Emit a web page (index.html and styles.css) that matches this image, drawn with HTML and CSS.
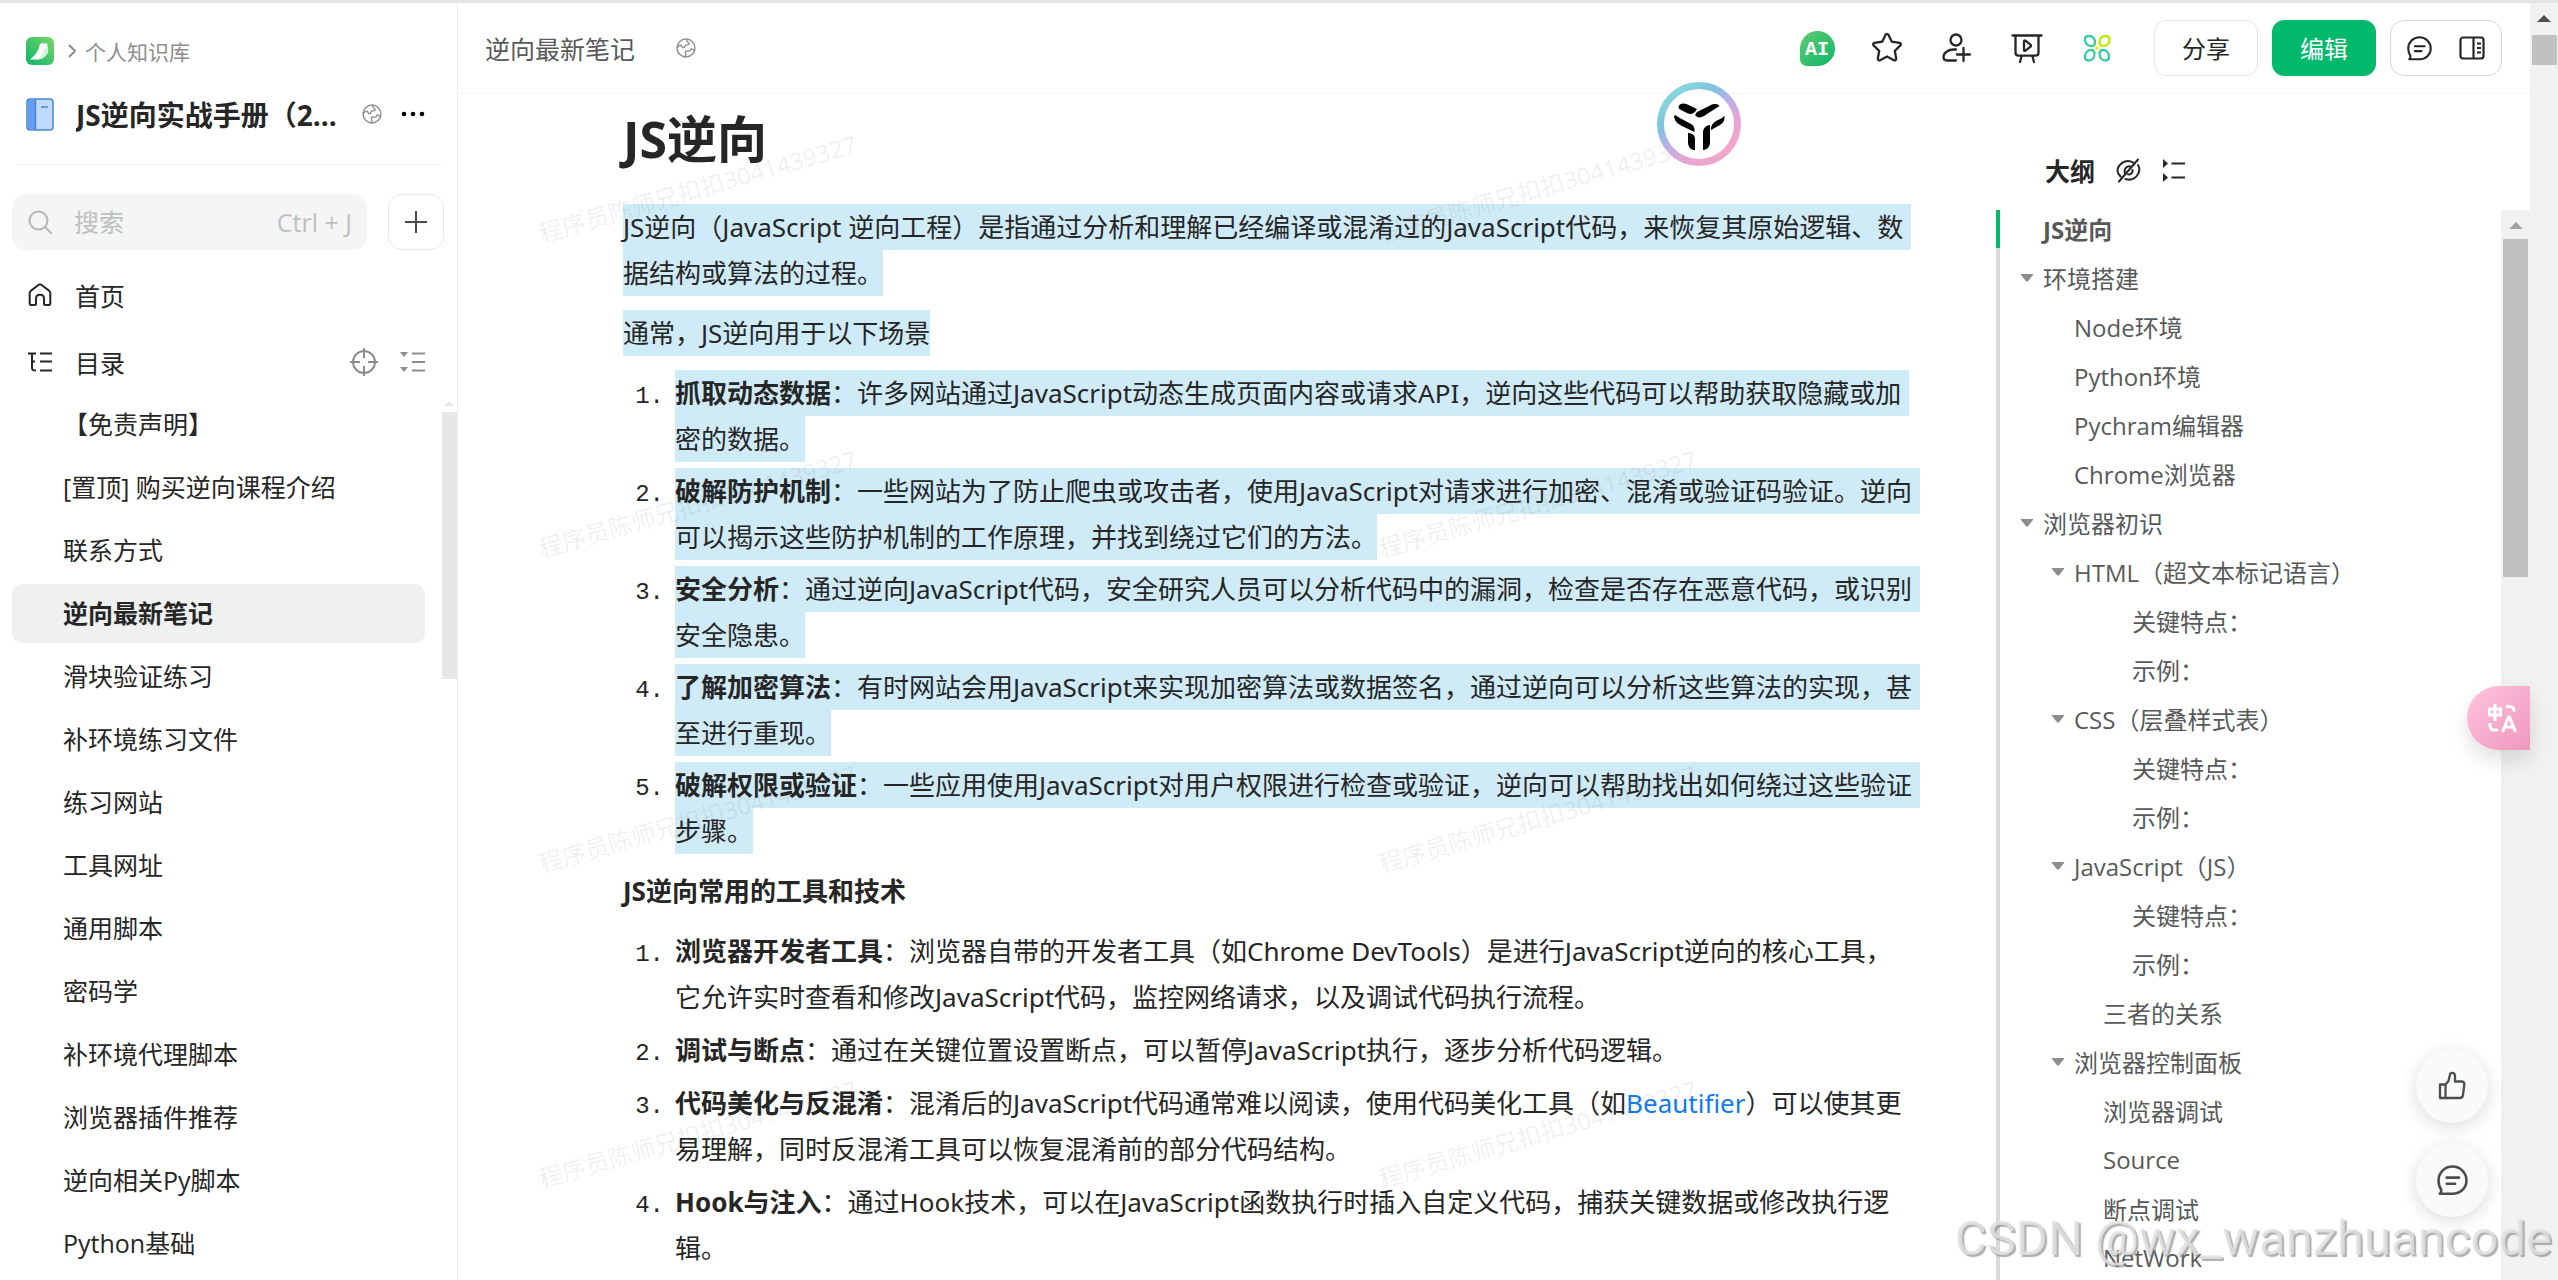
FILE: index.html
```html
<!DOCTYPE html>
<html lang="zh-CN">
<head>
<meta charset="utf-8">
<title>逆向最新笔记</title>
<link rel="stylesheet" href="styles.css">
</head>
<body>
<svg class="defs" aria-hidden="true">
  <symbol id="globe" viewBox="0 0 20 20"><g fill="none" stroke="currentColor" stroke-width="1.4" stroke-linecap="round" stroke-linejoin="round"><circle cx="10" cy="10" r="9"/><path d="M1.5 9.5c1-1.8 2.500-2.800 3.800-1.900 1 .8.8 2.400 2.200 2.200 1.500-.2.900-2 2.400-2.600 1.600-.6 3.300.2 3.400-1.400.1-1.500-1.800-1.300-2.300-2.300-.4-.8-.2-1.500.1-2.300M18.300 12.500c-1-.5-1.700-2-2.900-1.500-1 .5-.6 1.900-2 2.100-1.500.2-3-.6-3.900.6-.8 1.200.6 2 .4 3.100-.1.700-.4 1.200-.7 1.900"/></g></symbol>
  <symbol id="comment" viewBox="0 0 24 24"><path d="M2.200 22.300c.8-1 1.300-2 1.100-3.200C1.900 17.200 1.200 14.800 1.200 12 1.200 6 6 1.200 12 1.200S22.800 6 22.800 12 18 22.300 12 22.300zM7.500 9.800h9.500M7.500 14.500h6.500" fill="none" stroke="currentColor" stroke-width="2" stroke-linecap="round" stroke-linejoin="round"/></symbol>
  <symbol id="caret" viewBox="0 0 14 10"><path d="M1.500 1h11c.8 0 1 .6.500 1.100L8 8.200c-.6.600-1.400.600-2 0L1 2.100C.5 1.600.7 1 1.500 1z" fill="currentColor"/></symbol>
</svg>

<div class="app">
  <aside class="sidebar">
    <nav class="crumbs">
      <a href="#" aria-label="语雀"><svg width="28" height="28" viewBox="0 0 28 28"><defs><linearGradient id="lg" x1="1" y1="0" x2="0" y2="1"><stop offset="0" stop-color="#7ed668"/><stop offset="1" stop-color="#09b46b"/></linearGradient></defs><rect width="28" height="28" rx="6" fill="url(#lg)"/><path d="M4 22.500C8 19 12.500 15 13.500 8.500c.3-1.800 1.500-2.500 3-2.300 2 .3 3.500 0 4.500.600.8.500.5 1.300.2 1.900 1.300 1.800 1.500 4.800.3 7.300-2 4.300-6 6.300-9.500 6.500z" fill="#fff"/><path d="M21.200 9c1.500 3 1 7-1.700 9.800-2.200 2.300-5 3.600-7.500 3.700 4-2.500 2.500-6.500 9.200-13.500z" fill="#d5f1dc"/></svg></a>
      <svg class="chev" width="8" height="14" viewBox="0 0 8 14"><path d="M1 1l6 6-6 6" fill="none" stroke="#8a8f8d" stroke-width="2"/></svg>
      <a href="#">个人知识库</a>
    </nav>
    <div class="book">
      <svg width="28" height="33" viewBox="0 0 28 33"><rect x="1" y="1" width="26" height="31" rx="3" fill="#bfd8fd" stroke="#4a86cf" stroke-width="1.500"/><path d="M3.500 1.500H9.500v30h-6c-1 0-2-1-2-2v-26c0-1 1-2 2-2z" fill="#659df2"/><path d="M9.500 1v31M15 9h7" stroke="#4a86cf" stroke-width="1.500"/></svg>
      <strong>JS逆向实战手册（2...</strong>
      <svg class="gl" width="20" height="20"><use href="#globe"/></svg>
      <button class="plain" aria-label="更多"><svg width="24" height="6" viewBox="0 0 24 6"><circle cx="3" cy="3" r="2.300"/><circle cx="12" cy="3" r="2.300"/><circle cx="21" cy="3" r="2.300"/></svg></button>
    </div>
    <div class="searchrow">
      <label class="search">
        <svg width="24" height="24" viewBox="0 0 24 24"><g fill="none" stroke="#b1b5b4" stroke-width="2" stroke-linecap="round"><circle cx="10.500" cy="10.500" r="9"/><path d="M17.500 17.500l5.500 5.500"/></g></svg>
        <input type="text" placeholder="搜索" aria-label="搜索"><span>Ctrl + J</span>
      </label>
      <button class="add" aria-label="新建"><svg width="22" height="22" viewBox="0 0 22 22"><path d="M11 0v22M0 11h22" stroke="#484a4a" stroke-width="2"/></svg></button>
    </div>
    <a class="navrow" href="#"><svg width="24" height="24" viewBox="0 0 24 24"><path d="M3.500 22c-1 0-1.800-.8-1.800-1.800V10c0-1 .4-1.600 1-2.100l8-6.200c.8-.6 1.800-.6 2.600 0l8 6.200c.6.500 1 1.100 1 2.100v10.200c0 1-.8 1.800-1.800 1.800H17c-.8 0-1-.4-1-1v-5.500c0-2.200-1.500-3.800-4-3.800s-4 1.600-4 3.800V21c0 .6-.2 1-1 1z" fill="none" stroke="#262626" stroke-width="2"/></svg>首页</a>
    <div class="navrow toc">
      <svg width="24" height="22" viewBox="0 0 24 22"><path d="M0 2.500h8M4 3v14c0 2 1 2.500 4 2.500M4 10.500h3M12 2.500h12M12 10.500h12M12 19.500h12" fill="none" stroke="#262626" stroke-width="2"/></svg><span>目录</span>
      <button class="plain" aria-label="定位"><svg width="28" height="28" viewBox="0 0 28 28"><g fill="none" stroke="#8a8f8d" stroke-width="2"><circle cx="14" cy="14" r="11"/><path d="M14 0v10M14 18v10M0 14h10M18 14h10"/></g></svg></button>
      <button class="plain" aria-label="折叠"><svg width="26" height="22" viewBox="0 0 26 22"><path d="M0 1h8L4 6zM0 16h8l-4 5z" fill="#8a8f8d"/><path d="M12 2.500h13M12 11h13M12 19.500h13" stroke="#8a8f8d" stroke-width="2"/></svg></button>
    </div>
    <div class="treewrap">
      <nav class="tree">
        <a href="#">【免责声明】</a><a href="#">[置顶] 购买逆向课程介绍</a><a href="#">联系方式</a><a class="on" href="#">逆向最新笔记</a><a href="#">滑块验证练习</a><a href="#">补环境练习文件</a><a href="#">练习网站</a><a href="#">工具网址</a><a href="#">通用脚本</a><a href="#">密码学</a><a href="#">补环境代理脚本</a><a href="#">浏览器插件推荐</a><a href="#">逆向相关Py脚本</a><a href="#">Python基础</a>
      </nav>
      <div class="sbar"><i class="up"></i><i class="thumb"></i></div>
    </div>
  </aside>

  <main class="main">
    <header class="top">
      <span class="name">逆向最新笔记</span><svg class="gl" width="20" height="20"><use href="#globe"/></svg>
      <div class="tools">
        <button class="plain" aria-label="AI"><span class="ai">AI</span></button>
        <button class="plain" aria-label="收藏"><svg width="32" height="32" viewBox="0 0 32 32"><path d="M14.600 2.700c.6-1.200 2.200-1.200 2.800 0l3.400 7 7.700 1.100c1.300.2 1.800 1.700.9 2.600l-5.600 5.400 1.400 7.700c.2 1.300-1.100 2.300-2.300 1.700L16 24.600l-6.900 3.600c-1.200.6-2.500-.4-2.300-1.700l1.400-7.700-5.600-5.400c-.9-.9-.4-2.400.9-2.600l7.700-1.100z" fill="none" stroke="#262626" stroke-width="2.300"/></svg></button>
        <button class="plain" aria-label="协作"><svg width="30" height="30" viewBox="0 0 30 30"><g fill="none" stroke="#262626" stroke-width="2.300" stroke-linecap="round"><circle cx="14" cy="7" r="5.500"/><path d="M14 16.500h-2C6 16.500 1.500 20 1.500 24c0 2 1.500 3.500 3.500 3.500h9M15 21.500h13M21.500 15v13"/></g></svg></button>
        <button class="plain" aria-label="演示"><svg width="32" height="32" viewBox="0 0 32 32"><g fill="none" stroke="#262626" stroke-width="2.300" stroke-linecap="round" stroke-linejoin="round"><path d="M1.500 3.500h29M4.500 4v16.500c0 2 1.200 3.200 3.200 3.200h16.600c2 0 3.200-1.200 3.200-3.200V4M10.500 24.500l-1.500 5.500M21.500 24.500L23 30M13 9.500c0-.9.700-1.200 1.500-.8l5 4c.8.600.8 1.400 0 2l-5 4c-.8.500-1.500.2-1.500-.8z"/></g></svg></button>
        <button class="plain" aria-label="应用"><svg width="28" height="28" viewBox="0 0 28 28"><g fill="none" stroke="#35cda5" stroke-width="2.300"><path d="M6 2c4 0 6 3 6 6.500 0 2-1.500 3.500-4 3.500-3.500 0-6-2.500-6-6.500C2 3 3 2 6 2z"/><path d="M11.500 20c0 4-2.500 6.500-6 6.500C3 26.500 2 25.500 2 23c0-4 2.500-7 6-7 2.500 0 3.500 1.500 3.500 4zM16.500 20c0 4 2.500 6.500 6 6.500 2.500 0 3.500-1 3.500-3.500 0-4-2.500-7-6-7-2.500 0-3.500 1.500-3.500 4z"/><path d="M22.500 2c-4 0-6 3-6 6.500 0 2 1.500 3.500 4 3.500 3.500 0 6-2.500 6-6.500C26.500 3 25.500 2 22.500 2z" stroke="#b8ec05"/></g><circle cx="14" cy="14" r="1.800" fill="#ffdf00"/></svg></button>
      </div>
      <button class="btn">分享</button>
      <button class="btn primary">编辑</button>
      <div class="pair">
        <button class="plain" aria-label="评论"><svg width="25" height="25"><use href="#comment"/></svg></button>
        <button class="plain" aria-label="侧栏"><svg width="26" height="24" viewBox="0 0 26 24"><g fill="none" stroke="#262626" stroke-width="2.200"><rect x="1.500" y="1.500" width="23" height="21" rx="2.500"/><path d="M14.500 2v20M18 7.500h4M18 12h4M18 16.500h4"/></g></svg></button>
      </div>
    </header>

    <div class="content">
      <article class="doc">
        <h1>JS逆向</h1>
        <p><mark class="full">JS逆向（JavaScript 逆向工程）是指通过分析和理解已经编译或混淆过的JavaScript代码，来恢复其原始逻辑、数</mark><br><mark>据结构或算法的过程。</mark></p>
        <p><mark>通常，JS逆向用于以下场景</mark></p>
        <ol>
          <li><mark class="full"><b>抓取动态数据</b>：许多网站通过JavaScript动态生成页面内容或请求API，逆向这些代码可以帮助获取隐藏或加</mark><br><mark>密的数据。</mark></li>
          <li><mark class="full"><b>破解防护机制</b>：一些网站为了防止爬虫或攻击者，使用JavaScript对请求进行加密、混淆或验证码验证。逆向</mark><br><mark>可以揭示这些防护机制的工作原理，并找到绕过它们的方法。</mark></li>
          <li><mark class="full"><b>安全分析</b>：通过逆向JavaScript代码，安全研究人员可以分析代码中的漏洞，检查是否存在恶意代码，或识别</mark><br><mark>安全隐患。</mark></li>
          <li><mark class="full"><b>了解加密算法</b>：有时网站会用JavaScript来实现加密算法或数据签名，通过逆向可以分析这些算法的实现，甚</mark><br><mark>至进行重现。</mark></li>
          <li><mark class="full"><b>破解权限或验证</b>：一些应用使用JavaScript对用户权限进行检查或验证，逆向可以帮助找出如何绕过这些验证</mark><br><mark>步骤。</mark></li>
        </ol>
        <p><b>JS逆向常用的工具和技术</b></p>
        <ol class="loose">
          <li><b>浏览器开发者工具</b>：浏览器自带的开发者工具（如Chrome DevTools）是进行JavaScript逆向的核心工具，<br>它允许实时查看和修改JavaScript代码，监控网络请求，以及调试代码执行流程。</li>
          <li><b>调试与断点</b>：通过在关键位置设置断点，可以暂停JavaScript执行，逐步分析代码逻辑。</li>
          <li><b>代码美化与反混淆</b>：混淆后的JavaScript代码通常难以阅读，使用代码美化工具（如<a href="#">Beautifier</a>）可以使其更<br>易理解，同时反混淆工具可以恢复混淆前的部分代码结构。</li>
          <li><b>Hook与注入</b>：通过Hook技术，可以在JavaScript函数执行时插入自定义代码，捕获关键数据或修改执行逻<br>辑。</li>
        </ol>
        <div class="marks" aria-hidden="true"><span>程序员陈师兄扣扣3041439327</span><span>程序员陈师兄扣扣3041439327</span><span>程序员陈师兄扣扣3041439327</span><span>程序员陈师兄扣扣3041439327</span><span>程序员陈师兄扣扣3041439327</span><span>程序员陈师兄扣扣3041439327</span><span>程序员陈师兄扣扣3041439327</span><span>程序员陈师兄扣扣3041439327</span></div>
      </article>

      <aside class="outline">
        <div class="ohead"><strong>大纲</strong>
          <button class="plain" aria-label="隐藏"><svg width="25" height="25" viewBox="0 0 25 25"><g fill="none" stroke="#262626" stroke-width="2" stroke-linecap="round"><path d="M17 4.500C9-.5 1.500 8 1.500 12.500c0 2 1.500 4.500 3 6M22 7c4 7-2.500 17-12.500 14M15.500 9c-4-2.500-8 2-6.500 6M16.500 12c.5 3-2 5-4.500 4.500M22 1.500L3 23.500"/></g></svg></button>
          <button class="plain" aria-label="展开"><svg width="24" height="25" viewBox="0 0 24 25"><path d="M1 1l5 4.500-5 4.500zM1 15l5 4.500L1 24z" fill="#262626"/><path d="M9.500 5.500H23M9.500 19.500H23" stroke="#262626" stroke-width="2"/></svg></button>
        </div>
        <div class="obody">
          <nav class="olist">
            <a class="cur" href="#">JS逆向</a>
            <a href="#"><svg><use href="#caret"/></svg>环境搭建</a>
            <a class="l1" href="#">Node环境</a>
            <a class="l1" href="#">Python环境</a>
            <a class="l1" href="#">Pychram编辑器</a>
            <a class="l1" href="#">Chrome浏览器</a>
            <a href="#"><svg><use href="#caret"/></svg>浏览器初识</a>
            <a class="l1" href="#"><svg><use href="#caret"/></svg>HTML（超文本标记语言）</a>
            <a class="l3" href="#">关键特点：</a>
            <a class="l3" href="#">示例：</a>
            <a class="l1" href="#"><svg><use href="#caret"/></svg>CSS（层叠样式表）</a>
            <a class="l3" href="#">关键特点：</a>
            <a class="l3" href="#">示例：</a>
            <a class="l1" href="#"><svg><use href="#caret"/></svg>JavaScript（JS）</a>
            <a class="l3" href="#">关键特点：</a>
            <a class="l3" href="#">示例：</a>
            <a class="l2" href="#">三者的关系</a>
            <a class="l1" href="#"><svg><use href="#caret"/></svg>浏览器控制面板</a>
            <a class="l2" href="#">浏览器调试</a>
            <a class="l2" href="#">Source</a>
            <a class="l2" href="#">断点调试</a>
            <a class="l2" href="#">NetWork</a>
          </nav>
          <div class="sbar wide"><i class="up"></i><i class="thumb"></i></div>
        </div>
      </aside>
    </div>
  </main>
  <div class="sbar wide win"><i class="up"></i><i class="thumb"></i></div>
</div>

<button class="orb" aria-label="助手"><svg width="84" height="84" viewBox="0 0 84 84"><defs><linearGradient id="ring" x1=".15" y1=".1" x2=".8" y2=".95"><stop offset="0" stop-color="#88d6dc"/><stop offset=".25" stop-color="#7fc3e0"/><stop offset=".5" stop-color="#bfaee6"/><stop offset=".75" stop-color="#e6a5d3"/><stop offset="1" stop-color="#f2a6c8"/></linearGradient></defs><circle cx="42" cy="42" r="38.500" fill="#fff" stroke="url(#ring)" stroke-width="7"/><path d="M23 22.500c2-1.500 5-1.200 7.500 0L40 27c-2.500 5-6 5.500-9 4.500l-8-4c-2-1.200-2-3.500 0-5zM40 30l13-6.500c4-2 7.500-2 9.500.5L50 32c-5 3.500-9 5-12 1zM17 34c1-2 3 .5 5 1.500l11 6c4 2 5 4.500 4.500 8.500L25 44c-6-3-7.500-6-8-10zM54 48c0-4 1-6.500 5-9 3.500-2 7-3 8.500-5.500.5 4.500-1 7.500-4.500 9.500zM31 51c4 0 7 2 7 6v11c-4 0-7-2.500-7-8zM46 67V51c0-4 2-7.500 7-8v17c0 5-2.500 7.500-7 8z" fill="#000"/></svg></button>
<button class="translate" aria-label="翻译"><svg width="32" height="30" viewBox="0 0 32 30"><g fill="none" stroke="#fff" stroke-width="3"><path d="M2.500 6h11v6h-11zM8 1v17M19 3.500h4c2.500 0 4 1.500 4 5M3 20v2.500c0 3 1.500 4.500 4.500 4.500H11M15.500 29l6-15h1l6 15M17.500 24h9"/></g></svg></button>
<div class="floats">
  <button aria-label="点赞"><svg width="28" height="30" viewBox="0 0 28 30"><path d="M7.500 13.500H2v13.500h5.500zM7.500 13.500l3-3.500 1.500-6.500c.3-2 4.500-2.500 5 1v6h6.500c2 0 3 1.200 2.800 3l-1.300 10.500c-.3 2-1.300 3-3 3H7.500z" fill="none" stroke="#4a4d4e" stroke-width="2.300" stroke-linejoin="round"/></svg></button>
  <button aria-label="评论"><svg width="31" height="31"><use href="#comment"/></svg></button>
</div>
<div class="csdn" aria-hidden="true">CSDN @wx_wanzhuancode</div>
</body>
</html>
```
FILE: styles.css
```css
*, *::before, *::after { box-sizing: border-box; }
html, body { margin: 0; height: 100%; overflow: hidden; }
body {
  font-family: "Open Sans", "Noto Sans CJK SC", sans-serif;
  font-size: 24px;
  color: #262626;
  background: #fff;
  text-spacing-trim: space-all;
}
a { color: inherit; text-decoration: none; }
button { font: inherit; color: inherit; cursor: pointer; }
svg { display: block; flex: none; }
.defs { position: absolute; width: 0; height: 0; }
.plain { border: 0; background: none; padding: 0; display: flex; }
.gl { color: #8a8f8d; }

.app { display: flex; height: 100%; border-top: 3px solid #e4e4e4; }

/* sidebar */
.sidebar {
  flex: none; width: 458px; display: flex; flex-direction: column;
  border-right: 1px solid #eceeed; overflow: hidden; font-size: 25px;
}
.crumbs { display: flex; align-items: center; height: 30px; margin-top: 33px; padding-left: 26px; font-size: 21px; color: #8a8f8d; }
.chev { margin: 0 9px 0 14px; }
.book { display: flex; align-items: center; height: 99px; margin: 0 16px; padding: 0 16px 2px 10px; border-bottom: 1px solid #f0f2f1; }
.book strong { font-size: 28px; flex: 1; margin-left: 22px; white-space: nowrap; overflow: hidden; }
.book .gl { margin-right: 19px; }
.searchrow { display: flex; justify-content: space-between; padding: 0 13px 0 12px; margin-top: 29px; }
.search { width: 355px; height: 56px; border-radius: 14px; background: #f4f6f5; display: flex; align-items: center; padding: 0 15px 0 16px; color: #bec0bf; }
.search input { flex: 1; min-width: 0; border: 0; background: none; font: inherit; margin-left: 22px; padding: 0; outline: 0; }
.search input::placeholder { color: #bec0bf; opacity: 1; }
.add { width: 56px; height: 56px; border: 1px solid #e7e9e8; border-radius: 14px; background: #fff; padding: 0; display: flex; align-items: center; justify-content: center; }
.navrow { display: flex; align-items: center; height: 66px; padding: 0 31px 0 28px; margin-top: 12px; }
.navrow svg:first-child { margin-right: 23px; }
.toc { margin-top: 1px; }
.toc span { flex: 1; }
.toc .plain { margin-left: 22px; }
.toc .plain svg:first-child { margin-right: 0; }
.treewrap { flex: 1; display: flex; min-height: 0; }
.tree { flex: 1; display: flex; flex-direction: column; gap: 4px; padding: 0 16px 0 12px; overflow: hidden; }
.tree a { flex: none; line-height: 58px; height: 59px; padding-left: 51px; border-radius: 10px; white-space: nowrap; }
.tree .on { background: #eff0f0; font-weight: 700; }

/* scroll bars */
.sbar { flex: none; width: 16px; display: flex; flex-direction: column; align-items: center; padding-top: 6px; }
.sbar .up { border: 5px solid transparent; border-top: 0; border-bottom-color: #e6e8e7; }
.sbar .thumb { width: 15px; height: 267px; margin-top: 6px; background: #e6e8e7; }
.sbar.wide { width: 29px; background: #f1f1f1; padding-top: 12px; }
.sbar.wide .up { border-width: 7px; border-top: 0; border-bottom-color: #a3a3a3; }
.sbar.wide .thumb { width: 25px; height: 338px; margin-top: 10px; background: #c1c1c1; }
.sbar.win { width: 28px; }
.sbar.win .up { border-bottom-color: #505050; }
.sbar.win .thumb { height: 30px; margin-top: 13px; }

/* header */
.main { flex: 1; min-width: 0; display: flex; flex-direction: column; }
.top { flex: none; display: flex; align-items: center; height: 91px; padding: 0 28px 0 27px; border-bottom: 1px solid #f4f5f5; color: #585a5a; }
.top .name { font-size: 25px; }
.top .gl { margin-left: 41px; }
.tools { margin-left: auto; margin-right: 41px; display: flex; align-items: center; gap: 38px; color: #262626; }
.tools .plain { width: 32px; justify-content: center; }
.ai { flex: none; width: 35px; height: 35px; border-radius: 18px 18px 18px 7px; background: linear-gradient(135deg, #62ca72, #0cb66b); color: #fff; font: 700 20px/37px "Liberation Mono", monospace; text-align: center; }
.btn { width: 104px; height: 56px; border: 1px solid #e7e9e8; border-radius: 12px; background: #fff; color: #262626; padding: 0 0 2px; margin-right: 14px; }
.primary { background: #00b96b; border-color: #00b96b; color: #fff; }
.pair { width: 112px; height: 56px; border: 1px solid #d8dad9; border-radius: 14px; display: flex; align-items: center; justify-content: space-between; padding: 0 16px; color: #262626; }

/* document */
.content { flex: 1; display: flex; min-height: 0; }
.doc { flex: 1; min-width: 0; position: relative; overflow: hidden; padding: 13px 0 0 165px; font-family: "Noto Sans", "Noto Sans CJK SC", sans-serif; font-size: 26px; line-height: 46px; white-space: nowrap; }
.doc h1 { font-size: 50px; line-height: 64px; margin: 0 0 33px; }
.doc p { margin: 0 0 14px; }
.doc ol { margin: 0 0 14px; padding: 0 0 0 52px; list-style: none; counter-reset: n; display: flex; flex-direction: column; gap: 6px; }
.doc .loose { gap: 7px; }
.doc li { counter-increment: n; }
.doc li::before { content: counter(n) "."; display: inline-block; width: 52px; margin-left: -52px; padding-right: 11px; text-align: right; font: 24px/24px "Liberation Mono", monospace; }
.doc mark { background: #d0ebf8; color: inherit; padding: 5px 0; }
.doc mark.full { padding-right: 8px; }
.doc a { color: #117cee; }
.marks { position: absolute; left: 75px; top: 79px; display: grid; grid-template-columns: 840px 840px; grid-auto-rows: 315px; font-size: 24px; line-height: 32px; color: rgba(0, 0, 0, .07); pointer-events: none; }
.marks span { justify-self: start; align-self: start; transform: rotate(-16deg); }

/* outline */
.outline { flex: none; width: 534px; display: flex; flex-direction: column; }
.ohead { display: flex; align-items: center; gap: 21px; height: 116px; padding: 36px 0 0 49px; }
.ohead strong { font-size: 25px; }
.obody { flex: 1; display: flex; min-height: 0; }
.obody::before { content: ""; width: 4px; height: 38px; margin-right: -4px; background: #00b96b; z-index: 1; }
.olist { flex: 1; overflow: hidden; border-left: 4px solid #d8dad9; color: #585a5a; }
.olist a { display: flex; align-items: center; height: 49px; padding-left: 43px; white-space: nowrap; }
.olist a:first-child { margin-top: -6px; }
.olist svg { width: 14px; height: 10px; margin: 0 9px 0 -23px; color: #8a8f8d; }
.olist .l1 { padding-left: 74px; }
.olist .l2 { padding-left: 103px; }
.olist .l3 { padding-left: 132px; }
.olist .cur { font-weight: 700; }

/* floating controls */
.orb { position: absolute; left: 1657px; top: 82px; border: 0; background: none; padding: 0; }
.translate { position: absolute; right: 28px; top: 686px; width: 63px; height: 64px; border: 0; border-radius: 32px 0 0 32px; background: linear-gradient(135deg, #ffc5df, #ee98bd); display: flex; align-items: center; justify-content: flex-end; padding: 0 11px 0 0; box-shadow: 0 10px 20px rgba(0, 0, 0, .12); }
.floats { position: absolute; right: 70px; bottom: 63px; display: flex; flex-direction: column; gap: 20px; }
.floats button { width: 72px; height: 74px; border: 0; border-radius: 50%; background: #fafafa; color: #4a4d4e; display: flex; align-items: center; justify-content: center; padding: 0; box-shadow: 0 4px 18px rgba(0, 0, 0, .14); }
.csdn { position: absolute; right: 6px; bottom: 13px; font: 49px/56px Roboto, sans-serif; color: rgba(225, 225, 225, .85); text-shadow: 2px 2px 1px rgba(120, 120, 120, .6); }
```
